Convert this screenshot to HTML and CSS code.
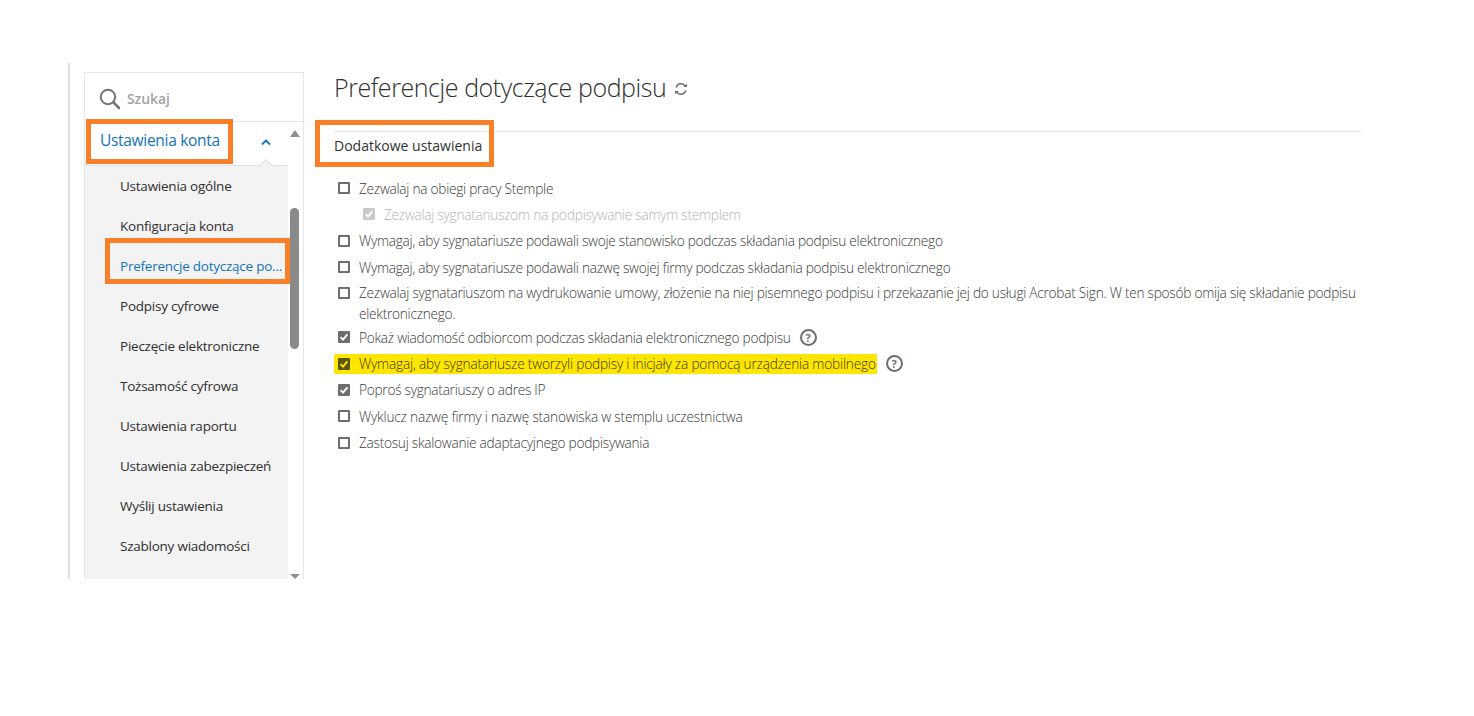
FILE: index.html
```html
<!DOCTYPE html>
<html lang="pl">
<head>
<meta charset="utf-8">
<title>Preferencje dotyczące podpisu</title>
<link rel="stylesheet" href="styles.css">
</head>
<body>
<div class="app">
  <aside class="sidebar">
    <div class="search">
      <svg class="search-icon" viewBox="0 0 22 22" width="22" height="22"><circle cx="9" cy="9" r="7.2" fill="none" stroke="#747474" stroke-width="2"/><path d="M14.2 14.2L20 20" stroke="#747474" stroke-width="2.6" stroke-linecap="round"/></svg>
      <span class="search-text">Szukaj</span>
    </div>
    <div class="nav-area">
      <nav class="nav">
        <div class="nav-head">
          <span class="nav-title">Ustawienia konta</span>
          <svg class="chev" viewBox="0 0 10 7" width="10" height="7"><path d="M1 5.5L5 1.5L9 5.5" fill="none" stroke="#1473b8" stroke-width="1.8"/></svg>
          <span class="notch"></span>
        </div>
        <ul class="nav-list">
          <li>Ustawienia ogólne</li>
          <li>Konfiguracja konta</li>
          <li class="active">Preferencje dotyczące po...</li>
          <li>Podpisy cyfrowe</li>
          <li>Pieczęcie elektroniczne</li>
          <li>Tożsamość cyfrowa</li>
          <li>Ustawienia raportu</li>
          <li>Ustawienia zabezpieczeń</li>
          <li>Wyślij ustawienia</li>
          <li>Szablony wiadomości</li>
        </ul>
      </nav>
      <div class="scrollbar">
        <span class="arrow-up"></span>
        <span class="thumb"></span>
        <span class="arrow-down"></span>
      </div>
    </div>
    <span class="mark mark-head"></span>
    <span class="mark mark-item"></span>
  </aside>
  <main class="content">
    <h1 class="title">Preferencje dotyczące podpisu
      <svg class="refresh" viewBox="0 0 14 14" width="14" height="14"><path d="M2.2 5.6A5 5 0 0 1 11 3.6M11.8 8.4A5 5 0 0 1 3 10.4" fill="none" stroke="#6e6e6e" stroke-width="1.5"/><path d="M9 5h4V1.8zM5 9H1v3.2z" fill="#6e6e6e"/></svg>
    </h1>
    <section class="panel">
      <h2 class="panel-title">Dodatkowe ustawienia</h2>
      <span class="mark mark-section"></span>
      <ul class="options">
        <li class="opt"><span class="box"></span><span>Zezwalaj na obiegi pracy Stemple</span></li>
        <li class="opt sub"><span class="box checked disabled"><svg viewBox="0 0 12 12"><path d="M2.6 6.2L5 8.6L9.4 3.4" fill="none" stroke="#fff" stroke-width="1.8"/></svg></span><span>Zezwalaj sygnatariuszom na podpisywanie samym stemplem</span></li>
        <li class="opt"><span class="box"></span><span>Wymagaj, aby sygnatariusze podawali swoje stanowisko podczas składania podpisu elektronicznego</span></li>
        <li class="opt"><span class="box"></span><span>Wymagaj, aby sygnatariusze podawali nazwę swojej firmy podczas składania podpisu elektronicznego</span></li>
        <li class="opt wrap"><span class="box"></span><span>Zezwalaj sygnatariuszom na wydrukowanie umowy, złożenie na niej pisemnego podpisu i przekazanie jej do usługi Acrobat Sign. W ten sposób omija się składanie podpisu elektronicznego.</span></li>
        <li class="opt"><span class="box checked"><svg viewBox="0 0 12 12"><path d="M2.6 6.2L5 8.6L9.4 3.4" fill="none" stroke="#fff" stroke-width="1.8"/></svg></span><span>Pokaż wiadomość odbiorcom podczas składania elektronicznego podpisu</span><span class="help">?</span></li>
        <li class="opt loose"><span class="hl-band"><span class="box checked"><svg viewBox="0 0 12 12"><path d="M2.6 6.2L5 8.6L9.4 3.4" fill="none" stroke="#ffe600" stroke-width="1.8"/></svg></span><span>Wymagaj, aby sygnatariusze tworzyli podpisy i inicjały za pomocą urządzenia mobilnego</span></span><span class="help">?</span></li>
        <li class="opt"><span class="box checked"><svg viewBox="0 0 12 12"><path d="M2.6 6.2L5 8.6L9.4 3.4" fill="none" stroke="#fff" stroke-width="1.8"/></svg></span><span>Poproś sygnatariuszy o adres IP</span></li>
        <li class="opt loose"><span class="box"></span><span>Wyklucz nazwę firmy i nazwę stanowiska w stemplu uczestnictwa</span></li>
        <li class="opt"><span class="box"></span><span>Zastosuj skalowanie adaptacyjnego podpisywania</span></li>
      </ul>
    </section>
  </main>
</div>
</body>
</html>
```

FILE: styles.css
```css
* { box-sizing: border-box; }
html, body { margin: 0; padding: 0; background: #fff; }
body {
  width: 1474px;
  height: 716px;
  overflow: hidden;
  padding: 63px 0 0 68px;
  font-family: "Open Sans", "Noto Sans", sans-serif;
  color: #2c2c2c;
}
ul { list-style: none; margin: 0; padding: 0; }
.app {
  display: flex;
  height: 516px;
  width: 1293px;
  border-left: 2px solid #dedede;
  padding: 9px 0 0 14px;
}
.sidebar {
  position: relative;
  width: 220px;
  flex: none;
  border: 1px solid #e6e6e6;
  border-bottom: 0;
  display: flex;
  flex-direction: column;
}
.search {
  height: 49px;
  flex: none;
  display: flex;
  align-items: center;
  gap: 6px;
  padding: 3px 0 0 14px;
  border-bottom: 1px solid #e6e6e6;
}
.search-text { font-size: 14px; font-weight: 600; color: #a3a3a3; letter-spacing: -0.1px; }
.nav-area { flex: 1; display: flex; min-height: 0; }
.nav { width: 203px; background: #f3f3f3; overflow: hidden; }
.nav-head {
  position: relative;
  height: 44px;
  background: #fff;
  border-bottom: 1px solid #e2e2e2;
  display: flex;
  align-items: center;
  justify-content: space-between;
  padding: 0 17px 8px 15px;
}
.nav-title { font-size: 15.5px; color: #1473b8; letter-spacing: -0.3px; }
.chev { margin-top: 5px; }
.notch {
  position: absolute;
  right: 17px;
  bottom: -1px;
  width: 10px;
  height: 10px;
  background: #f3f3f3;
  border-top: 1px solid #e2e2e2;
  border-left: 1px solid #e2e2e2;
  transform: translateY(5px) rotate(45deg);
}
.nav-list li {
  height: 40px;
  padding-left: 35px;
  line-height: 40px;
  font-size: 13.5px;
  letter-spacing: -0.24px;
  white-space: nowrap;
  color: #2f2f2f;
}
.nav-list li.active { color: #1473b8; }
.scrollbar {
  position: relative;
  width: 15px;
  background: #fff;
}
.thumb {
  position: absolute;
  left: 2px;
  top: 86px;
  width: 9px;
  height: 141px;
  border-radius: 5px;
  background: #8a8a8a;
}
.arrow-up, .arrow-down {
  position: absolute;
  left: 2px;
  width: 0;
  height: 0;
  border-left: 5px solid transparent;
  border-right: 5px solid transparent;
}
.arrow-up { top: 8px; border-bottom: 7px solid #8f8f8f; }
.arrow-down { bottom: 0; border-top: 5px solid #8f8f8f; }
.mark { position: absolute; border: 5px solid #f98029; pointer-events: none; }
.mark-head { left: 1px; top: 46px; width: 147px; height: 45px; }
.mark-item { left: 20px; top: 165px; width: 185px; height: 46px; }
.content { flex: 1; padding-left: 30px; min-width: 0; }
.title {
  margin: 0;
  height: 59px;
  padding-top: 0;
  font-size: 25px;
  font-weight: 300;
  line-height: 31px;
  letter-spacing: -0.43px;
  color: #2f2f2f;
  display: flex;
  align-items: flex-start;
  gap: 8px;
}
.refresh { margin-top: 10px; }
.panel {
  position: relative;
  width: 1027px;
  border-top: 1px solid #e2e2e2;
}
.panel-title {
  margin: 0;
  height: 45px;
  padding-top: 4px;
  font-size: 14px;
  font-weight: 500;
  line-height: 20px;
  color: #333;
}
.mark-section { left: -19px; top: -12px; width: 179px; height: 47px; }
.options { margin-top: -2px; }
.opt {
  display: flex;
  align-items: center;
  min-height: 26.3px;
  padding-left: 4px;
  font-size: 13.7px;
  font-weight: 300;
  letter-spacing: -0.27px;
  color: #3a3a3a;
}
.opt .box { margin-right: 9px; }
.opt.loose { letter-spacing: -0.2px; }
.box {
  flex: none;
  width: 12px;
  height: 12px;
  border: 2px solid #6e6e6e;
  border-radius: 1px;
  background: #fff;
  display: block;
}
.box svg { display: block; width: 12px; height: 12px; margin: -2px; }
.box.checked { background: #6e6e6e; }
.box.disabled { background: #c9c9c9; border-color: #c9c9c9; }
.sub { padding-left: 29px; color: #b4b4b4; }
.wrap { align-items: flex-start; line-height: 21px; padding-top: 2px; min-height: 44px; }
.wrap .box { margin-top: 5px; }
.hl-band {
  display: flex;
  align-items: center;
  background: #ffe600;
  height: 20px;
  margin-left: -4px;
  padding: 0 1px 0 4px;
  color: #3a3a00;
}
.hl-band .box { margin-right: 9px; background: #5c5700; border-color: #5c5700; }
.help {
  flex: none;
  width: 17px;
  height: 17px;
  margin-left: 9px;
  border: 2px solid #6e6e6e;
  border-radius: 50%;
  font-size: 11px;
  font-weight: 700;
  line-height: 13px;
  text-align: center;
  letter-spacing: 0;
  color: #6e6e6e;
}
```
